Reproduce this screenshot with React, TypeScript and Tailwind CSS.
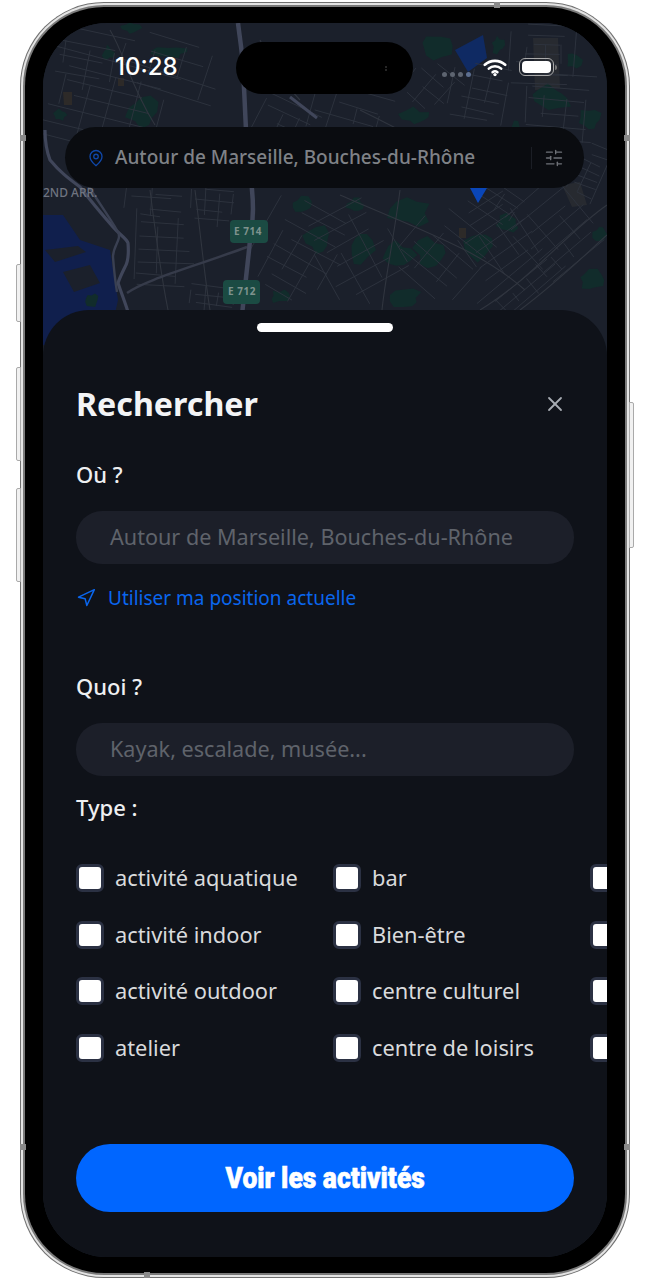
import { useMemo } from "react";
import { MapPin, Navigation, SlidersHorizontal, X } from "lucide-react";

function rng(seed: number) {
  return () => {
    seed |= 0;
    seed = (seed + 0x6d2b79f5) | 0;
    let t = Math.imul(seed ^ (seed >>> 15), 1 | seed);
    t = (t + Math.imul(t ^ (t >>> 7), 61 | t)) ^ t;
    return ((t ^ (t >>> 14)) >>> 0) / 4294967296;
  };
}

function MapDrawing() {
  const { streets, parks } = useMemo(() => {
    const r = rng(7);
    const patches: [number, number, number, number, number, number][] = [
      [105, 105, 70, 45, 0.25, 13], [85, 60, 50, 30, 0.2, 14], [170, 70, 50, 30, 0.3, 15],
      [165, 245, 30, 50, 0.05, 11], [215, 205, 25, 25, 0.1, 7], [150, 205, 25, 25, 0.1, 14],
      [300, 255, 45, 50, 0.5, 11], [290, 130, 35, 25, 0.45, 10], [350, 115, 40, 25, 0.3, 12],
      [360, 255, 40, 50, -0.5, 14], [440, 260, 40, 45, 0.7, 13], [500, 240, 35, 40, -0.6, 11],
      [560, 230, 40, 45, -0.7, 12], [530, 285, 55, 20, -0.7, 9], [480, 95, 30, 30, 0.2, 9],
      [560, 110, 35, 35, 0.08, 11], [545, 55, 35, 30, 0.05, 8], [430, 90, 25, 25, 0.7, 12],
      [590, 175, 18, 30, 0.4, 7], [490, 200, 30, 18, 0.6, 9], [215, 300, 25, 14, 0.1, 7],
    ];
    const s: string[] = [];
    for (const [cx, cy, w, h, a, g] of patches) {
      const c = Math.cos(a);
      const sn = Math.sin(a);
      const pt = (u: number, v: number) => `${(cx + u * c - v * sn).toFixed(1)} ${(cy + u * sn + v * c).toFixed(1)}`;
      for (let v = -h; v <= h; v += g + r() * 4) {
        const u0 = -w + r() * w * 0.7;
        const u1 = w - r() * w * 0.7;
        s.push(`M${pt(u0, v)}L${pt(u1, v + (r() - 0.5) * 3)}`);
      }
      for (let u = -w; u <= w; u += g * 1.6 + r() * 6) {
        const v0 = -h + r() * h * 0.8;
        const v1 = h - r() * h * 0.8;
        s.push(`M${pt(u, v0)}L${pt(u + (r() - 0.5) * 3, v1)}`);
      }
    }
    const p: string[] = [];
    const spots: [number, number, number, number][] = [
      [436, 46, 18, 15], [498, 45, 7, 9], [551, 98, 20, 13], [416, 117, 16, 9], [410, 213, 20, 15], [430, 253, 16, 15],
      [398, 255, 17, 13], [406, 298, 16, 10], [480, 246, 15, 15], [508, 223, 14, 11], [591, 280, 14, 11], [143, 112, 16, 16],
      [108, 53, 6, 8], [170, 52, 19, 6], [131, 28, 10, 6], [303, 205, 12, 9], [318, 240, 14, 14], [280, 297, 9, 7],
      [362, 250, 12, 18], [355, 205, 9, 7], [590, 120, 12, 11], [470, 150, 9, 7], [515, 130, 7, 9], [573, 60, 9, 9],
      [60, 115, 7, 6], [400, 80, 7, 8], [600, 235, 7, 9], [92, 300, 7, 7],
    ];
    for (const [cx, cy, rx, ry] of spots) {
      const pts: string[] = [];
      for (let i = 0; i < 11; i++) {
        const ang = (i / 11) * Math.PI * 2;
        const k = 0.55 + r() * 0.65;
        pts.push(`${(cx + Math.cos(ang) * rx * k).toFixed(1)},${(cy + Math.sin(ang) * ry * k).toFixed(1)}`);
      }
      p.push(pts.join(" "));
    }
    return { streets: s.join(""), parks: p };
  }, []);

  return (
    <svg className="absolute left-0 top-0 h-[340px] w-[564px]" viewBox="43 23 564 340" fill="none">
      <rect x="43" y="23" width="564" height="340" fill="#1b202b" />
      <path d="M43 215L63 215L80 240L110 250L118 300L108 345L43 345Z" fill="#101f4d" />
      <path d="M45 250L78 246L86 252L55 262ZM63 272L90 265L100 283L74 292Z" fill="#1b202b" />
      <path d="M455 50L483 35L487 58L468 72Z" fill="#0f2a63" />
      <path d="M533 38L558 38L560 88L535 90ZM562 185L580 182L587 205L572 207Z" fill="#272a30" />
      <path d="M63 92L72 92L72 105L64 105ZM118 78L124 78L124 86L118 86ZM459 228L466 228L466 238L459 238Z" fill="#2d2a28" />
      {parks.map((pts) => (
        <polygon key={pts} points={pts} fill="#112c2b" />
      ))}
      <path d={streets} stroke="#2f3440" strokeWidth="0.9" />
      <path d="M150 190C155 230 160 270 168 310M195 190C200 230 205 280 210 310M340 195C420 230 480 250 525 290M360 110C400 130 440 150 470 170M520 310C560 280 590 250 607 235M480 310C530 280 570 230 607 205M400 190C395 230 385 280 382 310M260 40C275 70 285 85 300 100M110 30C125 55 130 85 155 125" stroke="#30353f" strokeWidth="1.1" />
      <path d="M238 23C240 40 242 50 243 67C244 90 245 105 246 130C248 150 251 170 252 190C254 210 253 225 250 240C248 262 245 285 242 315" stroke="#40465a" strokeWidth="4.5" />
      <path d="M45 130C45 145 47 152 50 160C60 172 68 178 80 187C90 200 100 212 113 227C120 235 126 238 128 243C129 255 128 262 125 267C121 275 119 280 118 283C122 295 125 302 128 312" stroke="#40465a" strokeWidth="3.2" />
      <path d="M86 182C97 200 108 215 118 232C122 240 113 245 113 257C114 270 115 280 117 292" stroke="#3a4052" strokeWidth="2.4" />
      <path d="M127 293C145 280 190 268 247 247" stroke="#363b4a" strokeWidth="2.4" />
      <path d="M290 97L317 118" stroke="#40465a" strokeWidth="3" />
      <path d="M470 188L487 188L478 203Z" fill="#0a46b8" />
      <rect x="230" y="220" width="38" height="23" rx="4" fill="#1b4b43" />
      <rect x="223" y="280" width="37" height="24" rx="4" fill="#1b4b43" />
    </svg>
  );
}

function Wifi() {
  return (
    <svg width="24" height="19" viewBox="0 0 24 19" fill="none" stroke="#fff" strokeLinecap="round">
      <path d="M1.8 6.8C7.5 1.5 16.5 1.5 22.2 6.8" strokeWidth="2.6" />
      <path d="M5.8 10.6C9.2 7.5 14.8 7.5 18.2 10.6" strokeWidth="2.6" />
      <path d="M9.5 14.2C11 13 13 13 14.5 14.2" strokeWidth="2.4" />
      <circle cx="12" cy="16.6" r="1.7" fill="#fff" stroke="none" />
    </svg>
  );
}

const rows = [
  ["activité aquatique", "bar"],
  ["activité indoor", "Bien-être"],
  ["activité outdoor", "centre culturel"],
  ["atelier", "centre de loisirs"],
];

function Box() {
  return <span className="block h-[28px] w-[28px] shrink-0 rounded-[6px] border-[3px] border-[#2b3143] bg-white" />;
}

function Option({ label }: { label: string }) {
  return (
    <label className="flex h-[28px] w-[257px] shrink-0 items-center gap-[11px]">
      <Box />
      <span className="whitespace-nowrap text-[21.8px] leading-none text-[#d9dadc]">{label}</span>
    </label>
  );
}

export default function App() {
  return (
    <div
      className="relative h-[1280px] w-[650px] overflow-hidden bg-white pl-[20px] pt-[2px]"
      style={{ fontFamily: '"Noto Sans", sans-serif' }}
    >
      {/* side buttons */}
      <div className="absolute left-[16px] top-[264px] h-[58px] w-[5px] rounded-l-[2px] border border-[#aaa] bg-[#f1f1f1]" />
      <div className="absolute left-[16px] top-[367px] h-[94px] w-[5px] rounded-l-[2px] border border-[#aaa] bg-[#f1f1f1]" />
      <div className="absolute left-[16px] top-[488px] h-[94px] w-[5px] rounded-l-[2px] border border-[#aaa] bg-[#f1f1f1]" />
      <div className="absolute left-[629px] top-[402px] h-[146px] w-[5px] rounded-r-[2px] border border-[#aaa] bg-[#f1f1f1]" />

      <div className="h-[1276px] w-[610px] rounded-[84px] bg-[#6f6f6f] p-[1px]">
        <div className="h-full w-full rounded-[83px] bg-[#e4e4e4] p-[2px]">
          <div className="h-full w-full rounded-[81px] bg-[#7a7a7a] p-[2px]">
            <div className="h-full w-full rounded-[79px] bg-black pb-[15px] pl-[18px] pr-[18px] pt-[16px]">
              {/* screen */}
              <div className="relative flex h-[1234px] w-[564px] flex-col overflow-hidden rounded-[64px] bg-[#1b202b]">
                <MapDrawing />
                <span className="absolute left-[191px] top-[201px] text-[10px] font-bold tracking-[0.5px] text-[#7f938e]">E 714</span>
                <span className="absolute left-[185px] top-[261px] text-[10px] font-bold tracking-[0.5px] text-[#7f938e]">E 712</span>
                <span className="absolute left-[0px] top-[161px] text-[12px] font-medium text-[#6f7480]">2ND ARR.</span>
                <div className="absolute left-[193px] top-[19px] flex h-[52px] w-[177px] items-center justify-end rounded-full bg-black pr-[26px]">
                  <span className="flex flex-col gap-[1px]">
                    <span className="h-[2px] w-[2px] rounded-full bg-[#333]" />
                    <span className="h-[2px] w-[2px] rounded-full bg-[#333]" />
                  </span>
                </div>

                {/* status bar */}
                <div className="relative flex h-[104px] shrink-0 items-start justify-between pl-[72px] pr-[50px] pt-[29px]">
                  <span className="text-[24px] font-medium leading-[30px] text-white" style={{ fontFamily: "Inter, sans-serif" }}>
                    10:28
                  </span>
                  <div className="flex items-center gap-[12px] pt-[5px]">
                    <span className="mt-[15px] flex gap-[3px]">
                      <span className="h-[5px] w-[5px] rounded-full bg-[#5d6470]" />
                      <span className="h-[5px] w-[5px] rounded-full bg-[#5d6470]" />
                      <span className="h-[5px] w-[5px] rounded-full bg-[#5d6470]" />
                      <span className="h-[5px] w-[5px] rounded-full bg-[#5d6f90]" />
                    </span>
                    <Wifi />
                    <span className="flex items-center gap-[1px]">
                      <span className="block h-[18px] w-[35px] rounded-[6px] border border-[#aaa] p-[2px]">
                        <span className="block h-full w-full rounded-[4px] bg-white" />
                      </span>
                      <span className="h-[5px] w-[2px] rounded-r-[2px] bg-[#777]" />
                    </span>
                  </div>
                </div>

                {/* search bar */}
                <div className="relative mx-[22px] flex h-[61px] w-[519px] shrink-0 items-center rounded-full bg-[#0a0c10] pl-[22px] pr-[20px]">
                  <MapPin size={18} strokeWidth={1.8} className="shrink-0 text-[#0f47a8]" />
                  <span className="ml-[10px] flex-1 whitespace-nowrap text-[19px] font-medium text-[#7f8287]">
                    Autour de Marseille, Bouches-du-Rhône
                  </span>
                  <span className="mr-[12px] h-[22px] w-px bg-[#1b1e25]" />
                  <SlidersHorizontal size={20} strokeWidth={1.6} className="shrink-0 text-[#6f7278]" />
                </div>

                {/* sheet */}
                <div className="relative mt-[122px] flex flex-1 flex-col rounded-t-[46px] bg-[#0f1219] px-[33px]">
                  <div className="mx-auto mt-[13px] h-[9px] w-[136px] rounded-full bg-white" />
                  <div className="mt-[50px] flex items-center justify-between">
                    <h1 className="text-[32.2px] font-bold leading-[44px] text-[#f3f4f6]">Rechercher</h1>
                    <X size={24} strokeWidth={1.8} className="mr-[7px] text-[#a7abb2]" />
                  </div>
                  <div className="mt-[33px] text-[22px] font-medium leading-[30px] text-[#eeeff1]">Où ?</div>
                  <div className="mt-[22px] flex h-[53px] w-[498px] items-center rounded-[26px] bg-[#1c1f29] pl-[34px] text-[21.6px] text-[#5f636b]">
                    Autour de Marseille, Bouches-du-Rhône
                  </div>
                  <div className="mt-[22px] flex h-[24px] items-center gap-[12px] text-[19px] text-[#0a66ee]">
                    <Navigation size={20} strokeWidth={1.8} className="shrink-0" />
                    Utiliser ma position actuelle
                  </div>
                  <div className="mt-[61px] text-[22px] font-medium leading-[30px] text-[#eeeff1]">Quoi ?</div>
                  <div className="mt-[22px] flex h-[53px] w-[498px] items-center rounded-[26px] bg-[#1c1f29] pl-[34px] text-[21.6px] text-[#5f636b]">
                    Kayak, escalade, musée...
                  </div>
                  <div className="mt-[16px] text-[22px] font-medium leading-[30px] text-[#eeeff1]">Type :</div>
                  <div className="mt-[42px] flex flex-col gap-[28.5px]">
                    {rows.map((r) => (
                      <div key={r[0]} className="flex">
                        <Option label={r[0]} />
                        <Option label={r[1]} />
                        <Box />
                      </div>
                    ))}
                  </div>
                  <button className="mt-[82px] flex h-[68px] w-[498px] items-center justify-center rounded-full bg-[#0066ff] text-white">
                    <span
                      className="inline-block scale-x-[0.88] whitespace-nowrap text-[30px] font-black [-webkit-text-stroke:0.6px_#fff]"
                      style={{ fontFamily: "Roboto, sans-serif" }}
                    >
                      Voir les activités
                    </span>
                  </button>
                </div>
              </div>
            </div>
          </div>
        </div>
      </div>

      {/* antenna bands on the frame */}
      <div className="absolute left-[20px] top-[135px] h-[6px] w-[6px] bg-[#8a8a8a]" />
      <div className="absolute left-[624px] top-[135px] h-[6px] w-[6px] bg-[#8a8a8a]" />
      <div className="absolute left-[20px] top-[1144px] h-[6px] w-[6px] bg-[#8a8a8a]" />
      <div className="absolute left-[624px] top-[1144px] h-[6px] w-[6px] bg-[#8a8a8a]" />
      <div className="absolute left-[494px] top-[2px] h-[6px] w-[6px] bg-[#8a8a8a]" />
      <div className="absolute left-[144px] top-[1272px] h-[6px] w-[6px] bg-[#8a8a8a]" />
    </div>
  );
}
